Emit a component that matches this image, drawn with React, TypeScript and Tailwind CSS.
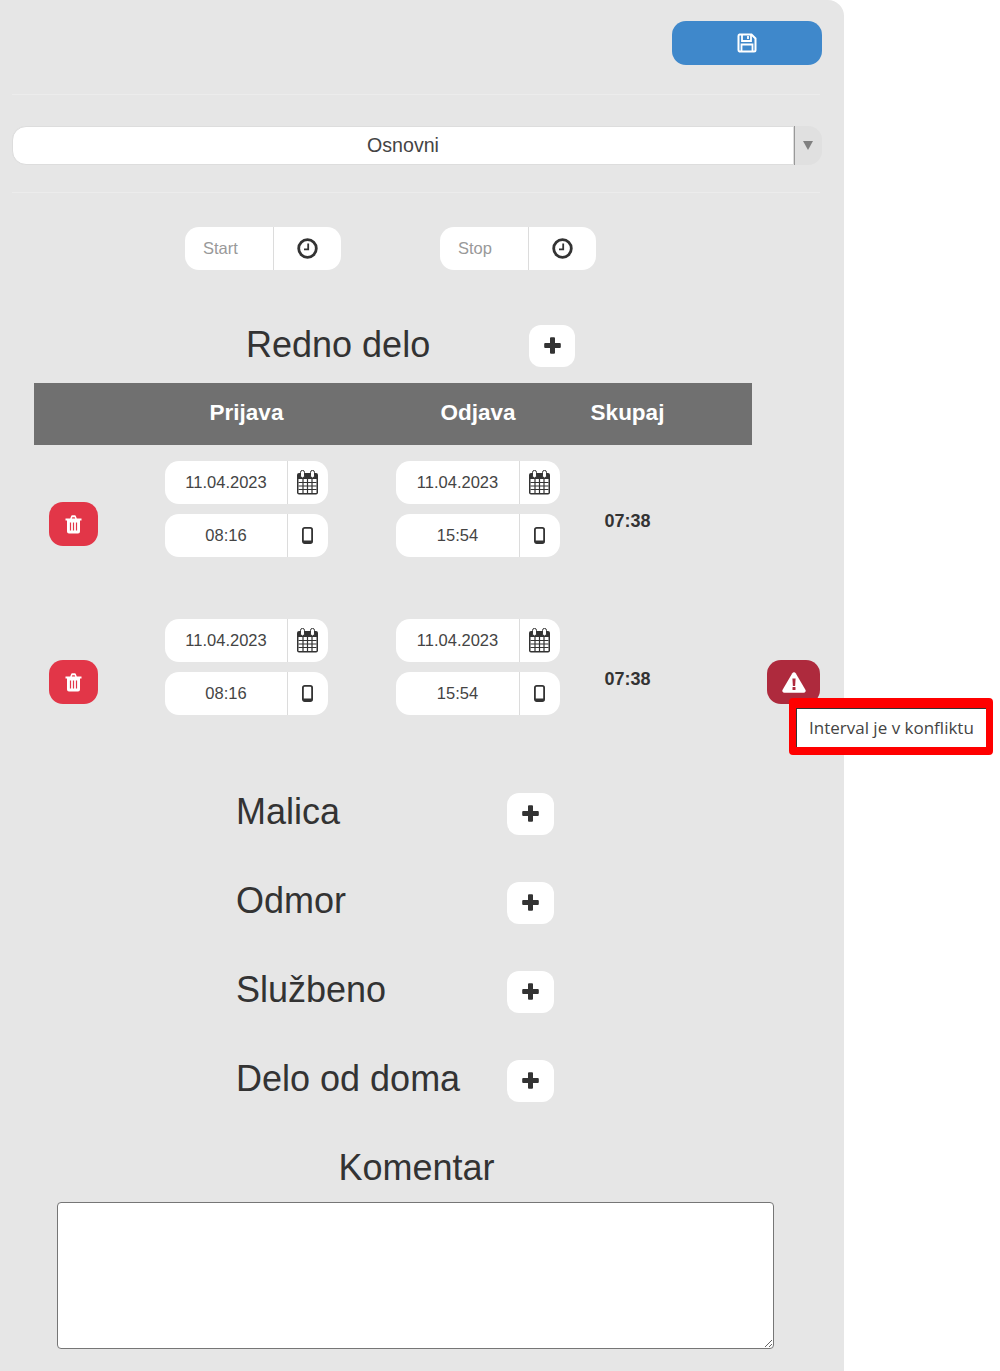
import React from "react";

function SaveIcon() {
  return (
    <svg width="20" height="20" viewBox="0 0 20 20" fill="none" stroke="currentColor" strokeWidth="2">
      <path d="M2.500 1.500h12l4 4v11.500a1.500 1.500 0 0 1-1.500 1.500H2.500A1.500 1.500 0 0 1 1.500 17V3a1.500 1.500 0 0 1 1-1.500z" />
      <path d="M5 2v6h9V2" strokeWidth="1.800" />
      <path d="M4.500 18.500v-7h11v7" strokeWidth="1.800" />
      <path d="M11 3v3" strokeWidth="1.800" />
    </svg>
  );
}

function WarningIcon() {
  return (
    <svg width="24" height="21" viewBox="0 0 24 21">
      <path d="M10.300 1.200a2 2 0 0 1 3.400 0l9.700 16.600a2 2 0 0 1-1.700 3H2.300a2 2 0 0 1-1.700-3z" fill="#fff" />
      <path d="M10.400 6.500h3.200l-.5 7.500h-2.200z" fill="#ae2a3d" />
      <rect x="10.500" y="15" width="3" height="3" rx="0.500" fill="#ae2a3d" />
    </svg>
  );
}

function CalendarIcon() {
  return (
    <svg width="23" height="25" viewBox="0 0 23 25" fill="none" className="text-[#333]">
      <path d="M3 3h17a2 2 0 0 1 2 2v17.500a2 2 0 0 1-2 2H3a2 2 0 0 1-2-2V5a2 2 0 0 1 2-2z" fill="currentColor" />
      <rect x="2.500" y="9" width="18" height="14" fill="#fff" />
      <path d="M2.500 12.500h18M2.500 16h18M2.500 19.500h18M7 9v14M11.500 9v14M16 9v14" stroke="currentColor" strokeWidth="1.200" />
      <rect x="4.500" y="0.400" width="4" height="7.500" rx="2" fill="#fff" stroke="currentColor" strokeWidth="1" />
      <rect x="14.500" y="0.400" width="4" height="7.500" rx="2" fill="#fff" stroke="currentColor" strokeWidth="1" />
    </svg>
  );
}

function PhoneIcon() {
  return (
    <svg width="11" height="17" viewBox="0 0 11 17" className="text-[#333]">
      <rect x="0.900" y="0.900" width="9.200" height="15.200" rx="1.800" fill="none" stroke="currentColor" strokeWidth="1.800" />
      <rect x="1" y="13.500" width="9" height="2.500" fill="currentColor" />
    </svg>
  );
}

function ClockIcon() {
  return (
    <svg width="21" height="21" viewBox="0 0 21 21" fill="none" stroke="currentColor">
      <circle cx="10.500" cy="10.500" r="8.800" strokeWidth="2.800" />
      <path d="M11.200 5.500v5.800H7" strokeWidth="1.800" />
    </svg>
  );
}

function PlusIcon() {
  return (
    <svg width="17" height="17" viewBox="0 0 17 17" fill="currentColor">
      <path d="M6 1.200A1 1 0 0 1 7 .2h3a1 1 0 0 1 1 1V6h4.800a1 1 0 0 1 1 1v3a1 1 0 0 1-1 1H11v4.800a1 1 0 0 1-1 1H7a1 1 0 0 1-1-1V11H1.200a1 1 0 0 1-1-1V7a1 1 0 0 1 1-1H6z" />
    </svg>
  );
}

function TrashIcon() {
  return (
    <svg width="17" height="19" viewBox="0 0 17 19">
      <path d="M0.500 3.500h4.700l1-2.500a1 1 0 0 1 1-.8h2.600a1 1 0 0 1 1 .8l1 2.500h4.700v2h-1.500v11a2 2 0 0 1-2 2H4a2 2 0 0 1-2-2v-11H.5z" fill="#fff" />
      <path d="M5.500 7.500v8M8.500 7.500v8M11.500 7.500v8" stroke="#e23648" strokeWidth="1.200" />
      <path d="M6.800 3.500l.5-1.200h2.400l.5 1.200z" fill="#e23648" />
    </svg>
  );
}

function Field({ value, icon, wide }: { value?: string; icon: React.ReactNode; wide?: boolean }) {
  return (
    <div className={wide ? "flex h-[43px] w-[164px] rounded-[14px] bg-white" : "flex h-[43px] w-[163px] rounded-[14px] bg-white"}>
      <div className={wide ? "flex w-[124px] items-center justify-center border-r border-[#dcdcdc] text-[16.500px] text-[#444]" : "flex w-[123px] items-center justify-center border-r border-[#dcdcdc] text-[16.500px] text-[#444]"}>{value}</div>
      <div className="flex flex-1 items-center justify-center pr-[1px]">{icon}</div>
    </div>
  );
}

function ClockField({ label }: { label: string }) {
  return (
    <div className="flex h-[43px] w-[156px] rounded-[14px] bg-white">
      <div className="flex w-[89px] items-center border-r border-[#dcdcdc] pl-[18px] text-[16.500px] text-[#999]">{label}</div>
      <div className="flex flex-1 items-center justify-center text-[#333]">
        <ClockIcon />
      </div>
    </div>
  );
}

function PlusButton({ narrow }: { narrow?: boolean }) {
  return (
    <button className={narrow ? "flex h-[42px] w-[46px] items-center justify-center rounded-[12px] bg-white pb-[1px] text-[#333]" : "flex h-[42px] w-[47px] items-center justify-center rounded-[12px] bg-white pb-[2px] text-[#333]"}>
      <PlusIcon />
    </button>
  );
}

function Section({ title }: { title: string }) {
  return (
    <div className="flex h-[42px] items-center pl-[224px]">
      <h2 className="mb-[4px] w-[271px] text-[36px] leading-[38px] text-[#333]">{title}</h2>
      <PlusButton />
    </div>
  );
}

function EntryRow({ warning }: { warning?: boolean }) {
  return (
    <div className="relative flex h-[158px] pl-[37px]">
      <button className="mt-[41px] flex h-[44px] w-[49px] items-center justify-center rounded-[14px] bg-[#e23648] text-white">
        <TrashIcon />
      </button>
      <div className="ml-[67px] flex w-[231px] flex-col gap-[10px]">
        <Field value="11.04.2023" icon={<CalendarIcon />} />
        <Field value="08:16" icon={<PhoneIcon />} />
      </div>
      <div className="flex w-[164px] flex-col gap-[10px]">
        <Field wide value="11.04.2023" icon={<CalendarIcon />} />
        <Field wide value="15:54" icon={<PhoneIcon />} />
      </div>
      <div className="ml-[30px] mt-[49px] w-[75px] text-center text-[18px] leading-[22px] font-bold text-[#333]">07:38</div>
      {warning && (
        <button className="ml-[102px] mt-[41px] flex h-[44px] w-[53px] items-center justify-center rounded-[14px] bg-[#ae2a3d] text-white">
          <WarningIcon />
        </button>
      )}
    </div>
  );
}

export default function App() {
  return (
    <div className="relative h-[1371px] w-[1000px] overflow-hidden bg-white font-['Liberation_Sans',Arial,sans-serif]">
      <div className="h-[1371px] w-[844px] rounded-tr-[16px] bg-[#e6e6e6] px-[12px] pt-[21px]">
        <div className="flex justify-end pr-[10px]">
          <button className="flex h-[44px] w-[150px] items-center justify-center rounded-[14px] bg-[#3f88cb] text-white">
            <SaveIcon />
          </button>
        </div>
        <div className="mr-[12px] mt-[29px] border-t border-[#ececec]" />
        <div className="mr-[10px] mt-[31px] flex h-[39px] rounded-[14px] bg-[#e0e0e0]">
          <div className="flex flex-1 items-center justify-center rounded-l-[14px] border border-[#dddddd] bg-white pt-[1px] text-[19.600px] text-[#444]">Osnovni</div>
          <div className="flex w-[28px] items-center justify-center border-l border-[#999] pr-[2px] text-[#808080]">
            <svg width="10" height="9" viewBox="0 0 10 9"><path d="M0 0h10L5 9z" fill="currentColor" /></svg>
          </div>
        </div>
        <div className="mr-[12px] mt-[27px] border-t border-[#ececec]" />
        <div className="mt-[34px] flex gap-[99px] pl-[173px]">
          <ClockField label="Start" />
          <ClockField label="Stop" />
        </div>
        <div className="mt-[55px] flex h-[42px] items-center pl-[234px]">
          <h2 className="mb-[2px] w-[283px] text-[36px] leading-[38px] text-[#333]">Redno delo</h2>
          <PlusButton narrow />
        </div>
        <div className="ml-[22px] mt-[16px] flex h-[62px] w-[718px] items-center bg-[#707070] pb-[2px] pl-[131px] text-[22.500px] font-bold text-white">
          <div className="w-[231px] pr-[68px] text-center">Prijava</div>
          <div className="w-[164px] text-center">Odjava</div>
          <div className="ml-[30px] w-[75px] whitespace-nowrap text-center">Skupaj</div>
        </div>
        <div className="mt-[16px]">
          <EntryRow />
          <EntryRow warning />
        </div>
        <div className="mt-[16px] flex flex-col gap-[47px]">
          <Section title="Malica" />
          <Section title="Odmor" />
          <Section title="Službeno" />
          <Section title="Delo od doma" />
        </div>
        <h2 className="ml-[-12px] mt-[46px] w-[833px] text-center text-[36px] leading-[40px] text-[#333]">Komentar</h2>
        <textarea className="ml-[45px] mt-[14px] block h-[147px] w-[717px] rounded-[4px] border border-[#767676] bg-white" />
      </div>
      <div className="absolute left-[789px] top-[698px] h-[57px] w-[204px] rounded-[4px] border-x-[7px] border-t-[10px] border-b-[8px] border-[#ff0000] bg-white">
        <div className="flex h-full items-center border-l border-t border-[#333] pl-[12px] font-['Open_Sans',sans-serif] text-[17px] whitespace-nowrap text-[#444]">
          Interval je v konfliktu
        </div>
      </div>
    </div>
  );
}
